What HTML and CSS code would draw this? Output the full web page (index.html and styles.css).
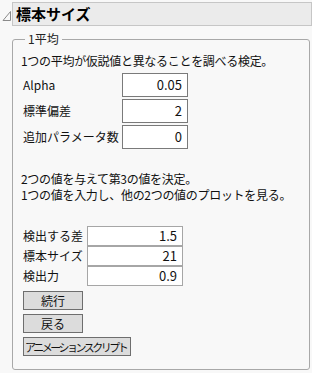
FILE: index.html
```html
<!DOCTYPE html>
<html lang="ja">
<head>
    <meta charset="UTF-8">
    <title>標本サイズ</title>
    <link rel="stylesheet" href="styles.css">
</head>
<body>
    <div class="outline">
        <svg class="toggle" width="10" height="12" viewBox="0 0 10 12">
            <path d="M8.5 1.5 L8.5 10.5 L1 10.5 Z" fill="none" stroke="#8a8a8a" stroke-width="1"/>
        </svg>
        <div class="title">標本サイズ</div>
    </div>

    <fieldset class="group">
        <legend>1平均</legend>

        <p class="note first">1つの平均が仮説値と異なることを調べる検定。</p>

        <div class="params">
            <div class="label">Alpha</div>
            <div class="box">0.05</div>
            <div class="label">標準偏差</div>
            <div class="box">2</div>
            <div class="label">追加パラメータ数</div>
            <div class="box">0</div>
        </div>

        <p class="note gap">2つの値を与えて第3の値を決定。</p>
        <p class="note">1つの値を入力し、他の2つの値のプロットを見る。</p>

        <div class="solve">
            <div class="label">検出する差</div>
            <div class="box">1.5</div>
            <div class="label">標本サイズ</div>
            <div class="box">21</div>
            <div class="label">検出力</div>
            <div class="box">0.9</div>
        </div>

        <div class="buttons">
            <button class="btn small">続行</button>
            <button class="btn small">戻る</button>
            <button class="btn wide">アニメーションスクリプト</button>
        </div>
    </fieldset>
</body>
</html>
```

FILE: styles.css
```css
body {
    margin: 0;
    padding: 2px 0 0 2px;
    background-color: #f8f8f8;
    font-family: "Noto Sans CJK JP", "Noto Sans", sans-serif;
    font-size: 12px;
    color: #111;
}

.outline {
    display: flex;
    align-items: center;
}

.toggle {
    flex: none;
    width: 10px;
    height: 12px;
    margin-top: 4px;
}

.title {
    flex: 1;
    height: 22px;
    line-height: 22px;
    padding-left: 3px;
    background-color: #ebebeb;
    border: 1px solid #c6c6c6;
    font-size: 15px;
    font-weight: bold;
    color: #000;
}

.group {
    box-sizing: border-box;
    width: 298px;
    margin: 6px 0 0 10px;
    padding: 2px 8px 12px 8px;
    border: 1px solid #a8a8a8;
    border-radius: 3px;
    min-height: 338px;
}

.group legend {
    padding: 0 3px;
    margin-left: 4px;
    line-height: 14px;
    color: #222;
}

.note {
    margin: 0;
    line-height: 16px;
    letter-spacing: -0.3px;
}

.note.first {
    margin-top: 5px;
}

.note.gap {
    margin-top: 22px;
}

.params {
    display: grid;
    grid-template-columns: 99px 66px;
    row-gap: 2px;
    margin: 4px 0 0 2px;
}

.params .label {
    line-height: 24px;
}

.params .box {
    box-sizing: border-box;
    height: 24px;
    border: 1px solid #7a7a7a;
}

.box {
    background-color: #fff;
    text-align: right;
    padding-right: 5px;
    font-size: 13px;
    line-height: 21px;
}

.solve {
    display: grid;
    grid-template-columns: 64px 96px;
    row-gap: 0;
    margin: 23px 0 0 2px;
}

.solve .label {
    line-height: 20px;
}

.solve .box {
    box-sizing: border-box;
    height: 20px;
    border: 1px solid #a6a6a6;
    line-height: 18px;
}

.buttons {
    display: flex;
    flex-direction: column;
    align-items: flex-start;
    gap: 4px;
    margin: 5px 0 0 2px;
}

.btn {
    height: 19px;
    padding: 0 1px;
    background-color: #dcdcdc;
    border: 1px solid #6e6e6e;
    border-radius: 0;
    font-family: inherit;
    font-size: 12px;
    line-height: 16px;
    color: #111;
}

.btn.small {
    width: 60px;
}

.btn.wide {
    font-size: 11px;
    letter-spacing: -2.5px;
    padding: 0 4px 0 1px;
}
```
